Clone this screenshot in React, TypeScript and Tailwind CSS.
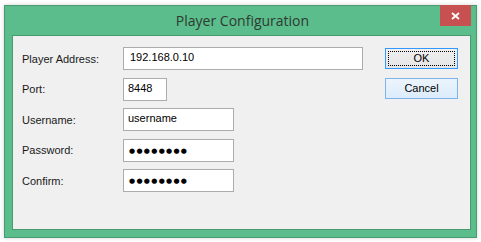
const rows = [
  { label: "Player Address:", value: "192.168.0.10", width: "w-[240px]", pad: "pl-[6px]" },
  { label: "Port:", value: "8448", width: "w-[44px]", pad: "pl-[4px]" },
  { label: "Username:", value: "username", width: "w-[111px]", pad: "pl-[4px]" },
  { label: "Password:", value: "●●●●●●●●", width: "w-[111px]", pad: "pl-[5px]", secret: true },
  { label: "Confirm:", value: "●●●●●●●●", width: "w-[111px]", pad: "pl-[5px]", secret: true },
];

const App = () => {
  return (
    <div className="min-h-screen bg-white pt-[5px] pl-[4px] font-['Liberation_Sans',Arial,sans-serif]">
      {/* window frame */}
      <div className="relative flex h-[233px] w-[473px] flex-col border border-[#4a9a6f] bg-[#5bbd8b] pb-[7px] pl-[7px] pr-[5px] shadow-[0_0_4px_rgba(0,0,0,0.18)]">
        <div className="flex h-[29px] items-center justify-center pb-[1px] pl-[2px] font-['Open_Sans',sans-serif] text-[14px] text-[#2f3a33]">
          Player Configuration
        </div>
        <button className="absolute right-[5px] top-[-1px] flex h-[21px] w-[31px] items-center justify-center bg-[#c75050]">
          <svg width="9" height="8" viewBox="0 0 9 8">
            <path d="M1 1 L8 7 M8 1 L1 7" stroke="white" strokeWidth="1.8" />
          </svg>
        </button>

        {/* client area */}
        <div className="flex flex-1 border border-[#4a9a6f] bg-[#f0f0f0] text-[11px] text-[#1a1a1a]">
          <div className="flex flex-col gap-[7.5px] pl-[9px] pt-[11px]">
            {rows.map((r) => (
              <div key={r.label} className="flex h-[23px] items-center">
                <span className="w-[101px] pt-[1px]">{r.label}</span>
                <div
                  className={`h-[23px] ${r.width} ${r.pad} border border-[#acacac] bg-white pt-[2px] leading-[15px] text-black`}
                >
                  {r.secret ? (
                    <span className="font-['DejaVu_Sans',sans-serif] text-[7px] tracking-[1.3px]">{r.value}</span>
                  ) : (
                    r.value
                  )}
                </div>
              </div>
            ))}
          </div>

          {/* buttons */}
          <div className="ml-auto flex flex-col gap-[9px] pr-[12px] pt-[12px]">
            <button className="relative h-[21px] w-[73px] border border-[#3399ff] bg-gradient-to-b from-[#f0f0f0] to-[#e5e5e5] text-[11px] text-black">
              <span className="absolute inset-[2px] border border-dotted border-black" />
              OK
            </button>
            <button className="h-[21px] w-[73px] border border-[#7eb4ea] bg-gradient-to-b from-[#ecf4fc] to-[#dcecfc] text-[11px] text-black">
              Cancel
            </button>
          </div>
        </div>
      </div>
    </div>
  );
};

export default App;
